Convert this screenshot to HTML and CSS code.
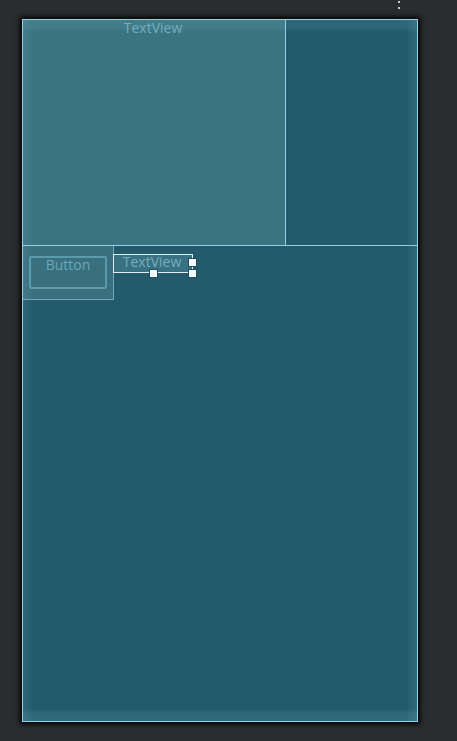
FILE: index.html
```html
<!DOCTYPE html>
<html>
<head>
<meta charset="utf-8">
<link rel="stylesheet" href="styles.css">
</head>
<body>
<div class="menu"><span class="dot"></span><span class="dot"></span></div>
<div class="frame">
  <div class="top-row">
    <div class="tv-big"><span class="tv-label">TextView</span></div>
    <div class="top-right"></div>
  </div>
  <div class="bottom">
    <div class="widgets">
      <div class="btn-box"><div class="btn">Button</div></div>
      <div class="tv-small">
        TextView
        <span class="handle h-right"></span>
        <span class="handle h-bottom"></span>
        <span class="handle h-corner"></span>
      </div>
    </div>
  </div>
  <div class="glow"></div>
</div>
</body>
</html>
```
FILE: styles.css
```css
html, body {
  margin: 0;
  padding: 0;
  background: #2b2c30;
  width: 457px;
  height: 741px;
  overflow: hidden;
  font-family: "Open Sans", "Noto Sans", sans-serif;
}
body {
  position: relative;
  padding-top: 19px;
  padding-left: 22px;
  box-sizing: border-box;
}
.menu {
  position: absolute;
  left: 398px;
  top: -5px;
  display: flex;
  flex-direction: column;
  gap: 4px;
}
.dot {
  width: 2px;
  height: 2px;
  background: #c8c8c8;
  display: block;
}
.menu::before {
  content: "";
  width: 2px;
  height: 2px;
  background: #c8c8c8;
  display: block;
}
.frame {
  position: relative;
  width: 396px;
  height: 703px;
  box-sizing: border-box;
  border: 1px solid #8fd3e4;
  background: #245b6c;
  box-shadow: 0 0 5px 2px #000;
  display: flex;
  flex-direction: column;
}
.top-row {
  display: flex;
  height: 226px;
  border-bottom: 1px solid #8fd3e4;
  box-sizing: border-box;
}
.tv-big {
  width: 263px;
  border-right: 1px solid #8fd3e4;
  box-sizing: border-box;
  background: #3c7381;
  display: flex;
  justify-content: center;
}
.tv-label {
  color: #6aaebf;
  font-size: 14px;
  line-height: 16px;
  margin-right: 2px;
}
.top-right {
  flex: 1;
}
.bottom {
  flex: 1;
}
.widgets {
  display: flex;
  align-items: flex-start;
}
.btn-box {
  width: 91px;
  height: 54px;
  box-sizing: border-box;
  border-right: 1px solid #6fa9b8;
  border-bottom: 1px solid #6fa9b8;
  background: #3a6f7e;
  padding: 10px 0 0 6px;
}
.btn {
  width: 78px;
  height: 33px;
  box-sizing: border-box;
  border: 2px solid #5a9aab;
  border-radius: 2px;
  color: #68a9ba;
  font-size: 14px;
  line-height: 14px;
  text-align: center;
}
.tv-small {
  position: relative;
  margin-top: 8px;
  margin-left: -1px;
  width: 80px;
  height: 19px;
  box-sizing: border-box;
  border: 1px solid #dbeef3;
  background: #3a7180;
  color: #6fb0c1;
  font-size: 14px;
  line-height: 14px;
  text-align: center;
  padding-right: 2px;
}
.handle {
  position: absolute;
  width: 9px;
  height: 9px;
  background: #f4fbfd;
  border: 1px solid #1f4f5e;
  box-sizing: border-box;
}
.h-right { right: -5px; top: 3px; }
.h-bottom { left: 35px; bottom: -6px; }
.h-corner { right: -5px; bottom: -6px; }
.glow {
  position: absolute;
  inset: 0;
  pointer-events: none;
  background:
    linear-gradient(to bottom, rgba(130,190,205,0.13) 0, rgba(130,190,205,0.10) 8px, rgba(130,190,205,0) 12px),
    linear-gradient(to top, rgba(130,190,205,0.16) 0, rgba(130,190,205,0.12) 8px, rgba(130,190,205,0) 12px),
    linear-gradient(to right, rgba(130,190,205,0.12) 0, rgba(130,190,205,0.06) 6px, rgba(130,190,205,0) 11px),
    linear-gradient(to left, rgba(130,190,205,0.14) 0, rgba(130,190,205,0.08) 6px, rgba(130,190,205,0) 11px);
}
```
